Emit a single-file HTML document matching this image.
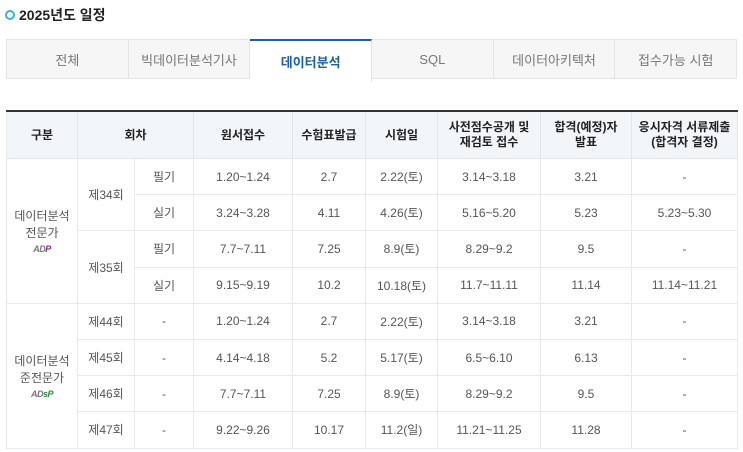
<!DOCTYPE html>
<html><head><meta charset="utf-8"><style>
body{margin:0;background:#fff;font-family:"Liberation Sans","Noto Sans CJK KR",sans-serif;width:743px;height:452px;overflow:hidden;position:relative}
.title{position:absolute;left:5px;top:5px;font-size:14px;font-weight:bold;color:#222;display:flex;align-items:center}
.dot{width:6px;height:6px;border:2.5px solid #35b5d0;border-radius:50%;margin-right:4px}
.tabs{position:absolute;left:6px;top:39px;width:731px;height:40px;display:flex;background:#f6f6f6;border:1px solid #e4e4e4;box-sizing:border-box}
.tab{flex:1;display:flex;align-items:center;justify-content:center;font-size:13px;color:#777;border-right:1px solid #e4e4e4}
.tab:last-child{border-right:none}
.tab.on{background:#fff;color:#1c5fa8;font-weight:bold;border-top:2px solid #1c5fa8;margin-top:-1px;height:41px}
table{position:absolute;left:6px;top:110px;width:731px;border-collapse:collapse;table-layout:fixed;border-top:2px solid #333}
th{background:#f3f6f9;height:46px;font-size:12px;font-weight:bold;color:#222;line-height:15px;border:1px solid #e3e7ea;border-top:none;padding:0}
td{height:35.2px;font-size:12px;color:#555;text-align:center;border:1px solid #e8ebee;padding:0}
tr td:first-child,tr th:first-child{border-left:1px solid #e3e7ea}
.adp{font-size:9px;font-weight:900;font-style:italic;letter-spacing:-0.5px;color:#777}
</style></head><body>
<div class="title"><span class="dot"></span>2025년도 일정</div>
<div class="tabs"><div class="tab">전체</div><div class="tab">빅데이터분석기사</div><div class="tab on">데이터분석</div><div class="tab">SQL</div><div class="tab">데이터아키텍처</div><div class="tab">접수가능 시험</div></div>
<table>
<colgroup><col style="width:71px"><col style="width:57px"><col style="width:59px"><col style="width:99px"><col style="width:73px"><col style="width:72px"><col style="width:103px"><col style="width:91px"><col style="width:106px"></colgroup>
<tr><th>구분</th><th colspan="2">회차</th><th>원서접수</th><th>수험표발급</th><th>시험일</th><th>사전점수공개 및<br>재검토 접수</th><th>합격(예정)자<br>발표</th><th>응시자격 서류제출<br>(합격자 결정)</th></tr>
<tr><td rowspan="4">데이터분석<br>전문가<br><span class="adp">AD<span style="color:#7a2a9a">P</span></span></td><td rowspan="2">제34회</td><td>필기</td><td>1.20~1.24</td><td>2.7</td><td>2.22(토)</td><td>3.14~3.18</td><td>3.21</td><td>-</td></tr>
<tr><td>실기</td><td>3.24~3.28</td><td>4.11</td><td>4.26(토)</td><td>5.16~5.20</td><td>5.23</td><td>5.23~5.30</td></tr>
<tr><td rowspan="2">제35회</td><td>필기</td><td>7.7~7.11</td><td>7.25</td><td>8.9(토)</td><td>8.29~9.2</td><td>9.5</td><td>-</td></tr>
<tr><td>실기</td><td>9.15~9.19</td><td>10.2</td><td>10.18(토)</td><td>11.7~11.11</td><td>11.14</td><td>11.14~11.21</td></tr>
<tr><td rowspan="4">데이터분석<br>준전문가<br><span class="adp">AD<span style="color:#2a8a3a">sP</span></span></td><td>제44회</td><td>-</td><td>1.20~1.24</td><td>2.7</td><td>2.22(토)</td><td>3.14~3.18</td><td>3.21</td><td>-</td></tr>
<tr><td>제45회</td><td>-</td><td>4.14~4.18</td><td>5.2</td><td>5.17(토)</td><td>6.5~6.10</td><td>6.13</td><td>-</td></tr>
<tr><td>제46회</td><td>-</td><td>7.7~7.11</td><td>7.25</td><td>8.9(토)</td><td>8.29~9.2</td><td>9.5</td><td>-</td></tr>
<tr><td>제47회</td><td>-</td><td>9.22~9.26</td><td>10.17</td><td>11.2(일)</td><td>11.21~11.25</td><td>11.28</td><td>-</td></tr>
</table>
</body></html>
